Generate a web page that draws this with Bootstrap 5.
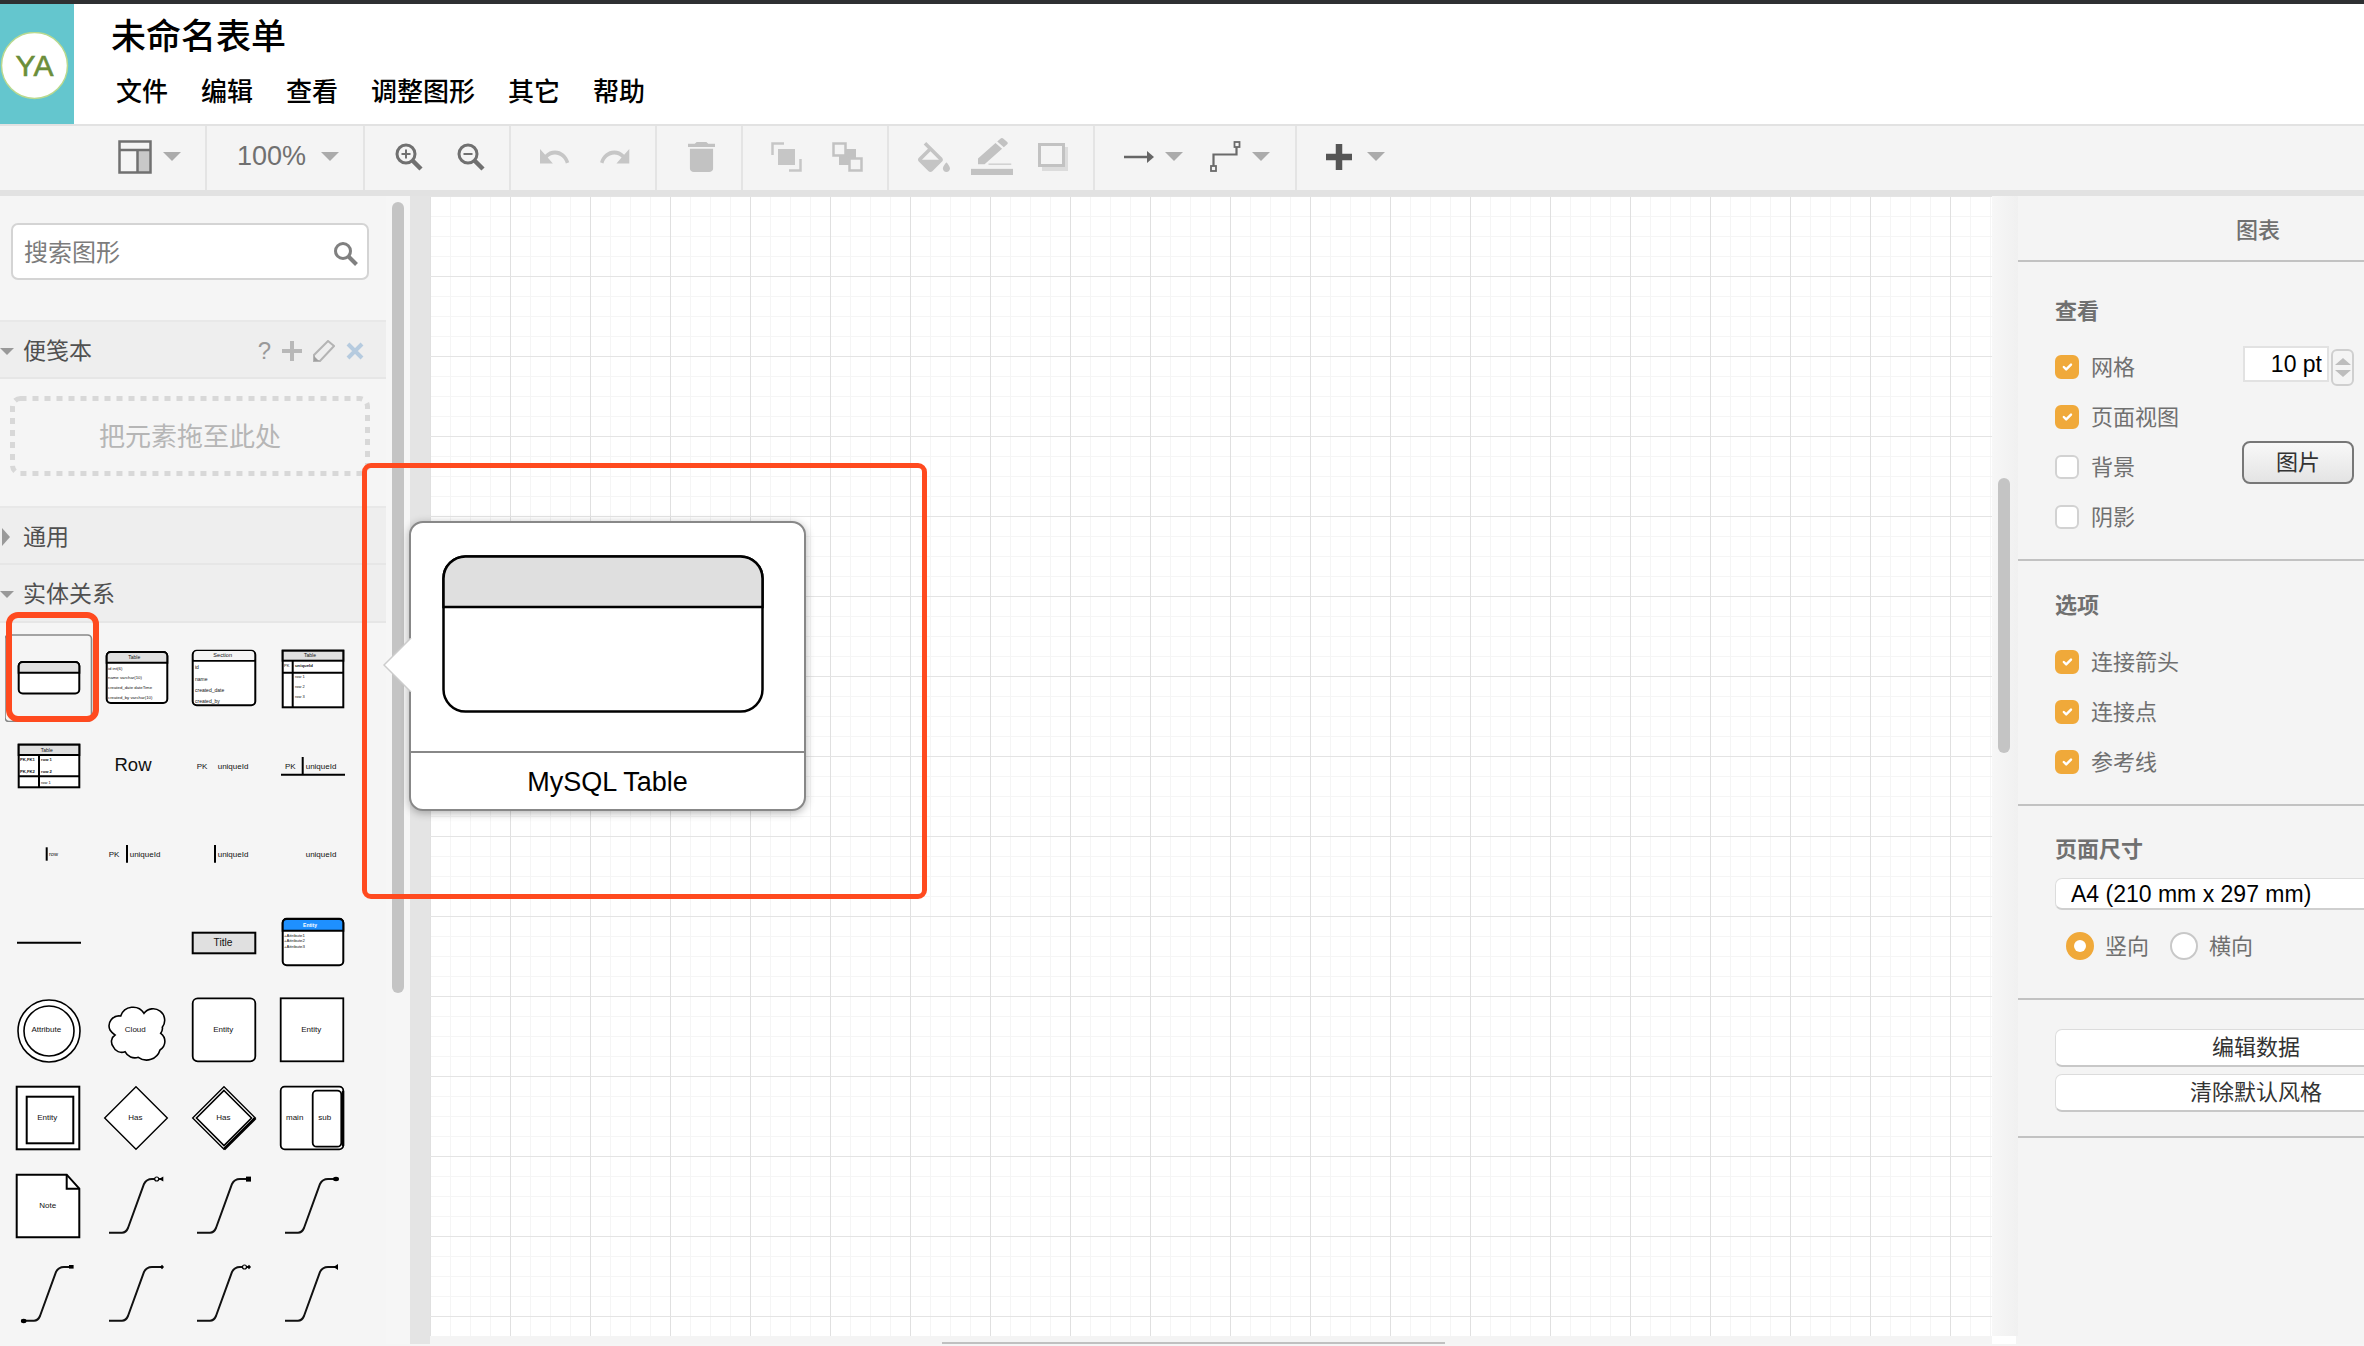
<!DOCTYPE html>
<html lang="zh-CN">

<head>
    <meta charset="UTF-8">
    <title>未命名表单</title>
    <link rel="stylesheet" href="https://cdn.jsdelivr.net/npm/bootstrap@5.3.3/dist/css/bootstrap.min.css">
    <style>
        html, body { height: 100%; overflow: hidden; }
        body { position: relative; background: #f5f5f5; font-family: "Liberation Sans", "Noto Sans CJK SC", sans-serif; color: #000; }
        svg { display: block; flex: none; }
        .darkline { height: 4px; background: #2e3032; }
        .topbar { height: 120px; background: #fff; }
        .logobox { width: 74px; height: 120px; background: #64c6ce; padding-top: 28px; }
        .titletext { font-size: 35px; line-height: 40px; margin: 13px 0 0 37px; height: 40px; font-weight: 500; }
        .menurow { margin: 17px 0 0 42px; gap: 33px; font-size: 26px; line-height: 36px; font-weight: 500; }
        .toolbar { height: 72px; background: #f4f4f4; border-top: 2px solid #e2e2e2; border-bottom: 6px solid #e2e2e2; }
        .tgroup { height: 100%; padding-bottom: 3px; border-right: 2px solid #e4e4e4; }
        .tg1 { width: 207px; padding-left: 118px; gap: 11px; }
        .tg2 { width: 158px; padding-left: 30px; gap: 15px; font-size: 27px; color: #707070; }
        .tg3 { width: 146px; padding-left: 30px; gap: 34px; }
        .tg4 { width: 146px; padding-left: 29px; gap: 30px; }
        .tg5 { width: 86px; padding-left: 31px; }
        .tg6 { width: 146px; padding-left: 28px; gap: 30px; }
        .tg7 { width: 206px; padding-left: 29px; gap: 21px; }
        .tg8 { width: 202px; padding-left: 29px; gap: 11px; }
        .tg9 { padding-left: 29px; gap: 15px; border-right: 0; }
        .caret-d { width: 0; height: 0; border-left: 9px solid transparent; border-right: 9px solid transparent; border-top: 9px solid #ababab; }
        .mainrow { height: 1148px; }
        .leftpane { width: 386px; height: 100%; overflow: hidden; }
        .searchbox { width: 358px; height: 57px; margin: 27px 0 40px 11px; background: #fff; border: 2px solid #d4d4d4; border-radius: 7px; padding: 3px 9px 0 9px; }
        .searchbox input { border: 0; outline: 0; width: 100%; font-size: 24px; background: transparent; font-family: inherit; }
        .searchbox input::placeholder { color: #7c7c7c; opacity: 1; }
        .sechead { height: 59px; padding-top: 3px; background: #eee; border-top: 2px solid #e8e8e8; border-bottom: 2px solid #e6e6e6; font-size: 23px; color: #505050; }
        .sechead.follow { border-top: 0; height: 58px; }
        .tri-d { width: 0; height: 0; margin-right: 9px; border-left: 7px solid transparent; border-right: 7px solid transparent; border-top: 7px solid #999; }
        .tri-r { width: 0; height: 0; margin: 0 13px 0 2px; border-top: 9px solid transparent; border-bottom: 9px solid transparent; border-left: 8px solid #999; }
        .sechelp { margin-left: auto; padding-right: 22px; gap: 11px; color: #999; font-size: 24px; }
        .dropzone { width: 360px; height: 80px; padding-top: 2px; margin: 17px 0 30px 10px; font-size: 26px; color: #b6b6b6; background: url("data:image/svg+xml,%3Csvg xmlns='http://www.w3.org/2000/svg' width='360' height='80'%3E%3Crect x='2.5' y='2.5' width='355' height='75' rx='8' fill='none' stroke='%23d8d8d8' stroke-width='5' stroke-dasharray='6 6'/%3E%3C/svg%3E") no-repeat; }
        .shapegrid { display: grid; grid-template-columns: repeat(4, 88px); grid-auto-rows: 88px; margin: 11px 0 0 5px; }
        .shapegrid text { font-family: "Liberation Sans", sans-serif; fill: #111; }
        .gutterleft { width: 44px; height: 100%; background: #f6f6f6; }
        .thumbleft { width: 12px; height: 791px; margin: 6px 6px 0; background: #c4c4c4; border-radius: 6px; }
        .gutterband { width: 20px; height: 100%; background: #e4e4e4; }
        .centerpane { width: 1588px; height: 100%; }
        .canvasrow { height: 1140px; }
        .canvasarea { width: 1562px; height: 100%; background-color: #fff;
            background-image: linear-gradient(#e4e4e4 1px, transparent 1px), linear-gradient(90deg, #e0e0e0 1px, transparent 1px), linear-gradient(#f5f5f5 1px, transparent 1px), linear-gradient(90deg, #f5f5f5 1px, transparent 1px);
            background-size: 80px 80px, 80px 80px, 20px 20px, 20px 20px; }
        .gutterright { width: 26px; height: 100%; background: linear-gradient(90deg, #f7f7f7, #f0f0f0); padding: 282px 8px 0 6px; }
        .thumbright { height: 275px; background: #c4c4c4; border-radius: 6px; }
        .bottomstrip { height: 8px; background: #f4f4f4; }
        .thumbbottom { width: 503px; height: 2px; margin: 6px 0 0 512px; background: #c0c0c0; }
        .cornerbox { width: 24px; height: 8px; margin-left: auto; margin-right: 2px; background: #fff; }
        .formpane { width: 346px; height: 100%; overflow: hidden; font-size: 22px; color: #707070; background: #f4f4f4; }
        .forminner { width: 480px; }
        .fsec { border-bottom: 2px solid #c2c2c2; padding-left: 37px; }
        .fsec-title { height: 66px; padding: 0 0 2px; font-size: 22px; line-height: 69px; font-weight: 500; text-align: center; }
        .fsec-view { height: 299px; padding-top: 34px; }
        .fsec-opt { height: 245px; padding-top: 29px; }
        .fsec-page { height: 194px; padding-top: 28px; }
        .fsec-act { height: 138px; padding-top: 29px; }
        .fhead { font-weight: 700; font-size: 22px; line-height: 32px; height: 32px; }
        .fsec-view .fhead { margin-bottom: 14px; }
        .fsec-opt .fhead { margin-bottom: 15px; }
        .fline { height: 50px; width: 299px; }
        .fline label { margin-left: 12px; }
        .form-check-input.ckbox { width: 24px; height: 24px; margin: 0; border: 2px solid #d2d2d2; border-radius: 6px; background-size: 78%; flex: none; }
        .form-check-input.rdbox { width: 28px; height: 28px; margin: 0; border: 2px solid #c8c8c8; flex: none; }
        .form-check-input:checked { background-color: #f0a93a; border-color: #f0a93a; }
        .ptinput { width: 86px; height: 36px; margin-bottom: 6px; padding: 0 5px; text-align: right; font-size: 23px; color: #000; border: 2px solid #e2e2e2; border-radius: 0; font-family: inherit; }
        .spinbox { width: 23px; height: 37px; margin-left: 2px; border: 2px solid #cfcfcf; border-radius: 6px; gap: 5px; }
        .spin-u { width: 0; height: 0; border-left: 8px solid transparent; border-right: 8px solid transparent; border-bottom: 7px solid #bdbdbd; }
        .spin-d { width: 0; height: 0; border-left: 8px solid transparent; border-right: 8px solid transparent; border-top: 7px solid #bdbdbd; }
        .imgbtn { width: 112px; height: 43px; margin-bottom: 9px; padding: 0; font-size: 22px; color: #333; border: 2px solid #777; border-radius: 8px; background: linear-gradient(#f8f8f8, #e4e4e4); }
        .pagesel { width: 402px; height: 32px; padding: 0 0 0 15px; margin-top: 12px; font-size: 23px; line-height: 30px; color: #000; background-image: none; border: 1px solid #dcdcdc; border-bottom: 2px solid #cfcfcf; border-radius: 7px; font-family: inherit; }
        .radline { height: 28px; margin: 22px 0 0 11px; }
        .radline label { margin: 0 21px 0 11px; }
        .wbtn { width: 402px; height: 38px; padding: 0; display: block; font-size: 22px; line-height: 34px; color: #333; background: #fff; border: 1px solid #dcdcdc; border-bottom: 2px solid #c8c8c8; border-radius: 7px; }
        .wbtn + .wbtn { margin-top: 7px; }
        .popbox { position: absolute; left: 409px; top: 521px; width: 397px; height: 290px; background: #fff; border: 2px solid #888; border-radius: 14px; box-shadow: 0 2px 8px rgba(0,0,0,.3); }
        .poparrow { position: absolute; left: -28px; top: 115px; }
        .popshape { padding: 32px 0 0 31px; height: 230px; border-bottom: 2px solid #888; }
        .poplabel { font-size: 27px; line-height: 58px; text-align: center; }
        .redbox { position: absolute; border: 5px solid #ff4a1f; border-radius: 9px; pointer-events: none; }
        .redbig { left: 362px; top: 463px; width: 565px; height: 436px; }
        .redsmall { left: 6px; top: 612px; width: 93px; height: 110px; border-width: 6px; border-radius: 12px; }
    </style>
</head>

<body>
    <svg width="0" height="0" class="position-absolute">
        <symbol id="conn" viewBox="0 0 88 88"><path d="M16 70.7H29Q33 70.7 35 66L51 22Q53.5 17 59 17H68" fill="none" stroke="#111" stroke-width="2"/></symbol>
    </svg>

    <div class="darkline"></div>

    <!-- cabecera -->
    <div class="topbar d-flex">
        <div class="logobox">
            <svg width="70" height="70" viewBox="0 0 70 70">
                <circle cx="34.5" cy="33.5" r="33" fill="#fff" stroke="#b9d98f" stroke-width="1.5"/>
                <text x="34.5" y="44" text-anchor="middle" font-size="30" font-family="Liberation Sans" fill="#6b8e3a" stroke="#6b8e3a" stroke-width=".6">YA</text>
            </svg>
        </div>
        <div>
            <div class="titletext">未命名表单</div>
            <div class="menurow d-flex">
                <span>文件</span><span>编辑</span><span>查看</span><span>调整图形</span><span>其它</span><span>帮助</span>
            </div>
        </div>
    </div>

    <!-- barra de herramientas -->
    <div class="toolbar d-flex">
        <div class="tgroup tg1 d-flex align-items-center">
            <svg width="34" height="34" viewBox="0 0 34 34"><rect x="20" y="10" width="12" height="22" fill="#c8c8c8"/><rect x="1.5" y="1.5" width="31" height="31" fill="none" stroke="#707070" stroke-width="2.5"/><path d="M1.5 10H32.5M19.5 10V32.5" stroke="#707070" stroke-width="2.5" fill="none"/></svg>
            <span class="caret-d"></span>
        </div>
        <div class="tgroup tg2 d-flex align-items-center"><span>100%</span><span class="caret-d"></span></div>
        <div class="tgroup tg3 d-flex align-items-center">
            <svg width="28" height="28" viewBox="0 0 28 28"><circle cx="11" cy="11" r="9" fill="none" stroke="#707070" stroke-width="3"/><path d="M17.5 17.5L26 26" stroke="#707070" stroke-width="4.5"/><path d="M6.5 11H15.5M11 6.5V15.5" stroke="#707070" stroke-width="2"/></svg>
            <svg width="28" height="28" viewBox="0 0 28 28"><circle cx="11" cy="11" r="9" fill="none" stroke="#707070" stroke-width="3"/><path d="M17.5 17.5L26 26" stroke="#707070" stroke-width="4.5"/><path d="M6.5 11H15.5" stroke="#707070" stroke-width="2"/></svg>
        </div>
        <div class="tgroup tg4 d-flex align-items-center">
            <svg width="30" height="16" viewBox="2 7 21 10" preserveAspectRatio="none"><path fill="#c6c6c6" d="M12.5 8c-2.65 0-5.05.99-6.9 2.6L2 7v9h9l-3.62-3.62c1.39-1.16 3.16-1.88 5.12-1.88 3.54 0 6.55 2.31 7.6 5.5l2.37-.78C21.08 11.03 17.15 8 12.5 8z"/></svg>
            <svg width="30" height="16" viewBox="1.5 7 21 10" preserveAspectRatio="none"><path fill="#c6c6c6" d="M18.4 10.6C16.55 8.99 14.15 8 11.5 8c-4.65 0-8.58 3.03-9.96 7.22L3.9 16c1.05-3.19 4.05-5.5 7.6-5.5 1.95 0 3.73.72 5.12 1.88L13 16h9V7l-3.6 3.6z"/></svg>
        </div>
        <div class="tgroup tg5 d-flex align-items-center">
            <svg width="27" height="30" viewBox="5 3 14 18" preserveAspectRatio="none"><path fill="#c2c2c2" d="M6 19c0 1.1.9 2 2 2h8c1.1 0 2-.9 2-2V7H6v12zM19 4h-3.5l-1-1h-5l-1 1H5v2h14V4z"/></svg>
        </div>
        <div class="tgroup tg6 d-flex align-items-center">
            <svg width="31" height="30" viewBox="0 0 31 30"><path d="M1.5 13V1.5H13M18 28.5H29.5V17" fill="none" stroke="#c6c6c6" stroke-width="2.5"/><rect x="7" y="7" width="17" height="16" fill="#c6c6c6"/></svg>
            <svg width="31" height="30" viewBox="0 0 31 30"><rect x="7" y="7" width="17" height="16" fill="#c2c2c2"/><rect x="1.5" y="1.5" width="12" height="12" fill="#f4f4f4" stroke="#c2c2c2" stroke-width="2.5"/><rect x="17.5" y="16.5" width="12" height="12" fill="#f4f4f4" stroke="#c2c2c2" stroke-width="2.5"/></svg>
        </div>
        <div class="tgroup tg7 d-flex align-items-center">
            <svg width="32" height="30" viewBox="3 0 18 17" preserveAspectRatio="none"><path fill="#c4c4c4" d="M16.56 8.94L7.62 0 6.21 1.41l2.38 2.38-5.15 5.15c-.59.59-.59 1.54 0 2.12l5.5 5.5c.29.29.68.44 1.06.44s.77-.15 1.06-.44l5.5-5.5c.59-.58.59-1.53 0-2.12zM5.21 10L10 5.21 14.79 10H5.21zM19 11.5s-2 2.17-2 3.5c0 1.1.9 2 2 2s2-.9 2-2c0-1.33-2-3.5-2-3.5z"/></svg>
            <svg width="42" height="37" viewBox="0 0 24 24" preserveAspectRatio="none"><path fill="#c2c2c2" d="M17.75 7L14 3.25l-10 10V17h3.75l10-10zm2.96-2.96c.39-.39.39-1.02 0-1.41L18.37.29c-.39-.39-1.02-.39-1.41 0L15 2.25 18.75 6l1.96-1.96z"/><rect y="20" width="24" height="4" fill="#c2c2c2"/><rect x="10" y="16.5" width="13" height="1" fill="#d2d2d2"/></svg>
            <svg width="30" height="28" viewBox="0 0 30 28" class="ms-1"><rect x="4" y="4" width="26" height="24" fill="#dcdcdc"/><rect x="1.5" y="1.5" width="24" height="21" fill="#f4f4f4" stroke="#c2c2c2" stroke-width="3"/></svg>
        </div>
        <div class="tgroup tg8 d-flex align-items-center">
            <svg width="30" height="14" viewBox="0 0 30 14"><path d="M0 7H24" stroke="#666" stroke-width="2.5"/><path d="M23 1L30 7L23 13Z" fill="#666"/></svg>
            <span class="caret-d"></span>
            <svg width="31" height="31" viewBox="0 0 31 31" class="ms-3"><path d="M3.5 25V13.5H26.5V5" fill="none" stroke="#6a6a6a" stroke-width="2.2"/><rect x="1" y="25" width="5" height="5" fill="#f4f4f4" stroke="#6a6a6a" stroke-width="1.8"/><rect x="24.5" y="1" width="5" height="5" fill="#f4f4f4" stroke="#6a6a6a" stroke-width="1.8"/></svg>
            <span class="caret-d"></span>
        </div>
        <div class="tgroup tg9 d-flex align-items-center">
            <svg width="26" height="26" viewBox="0 0 26 26"><path d="M13 0V26M0 13H26" stroke="#555" stroke-width="6.5"/></svg>
            <span class="caret-d"></span>
        </div>
    </div>

    <div class="mainrow d-flex">

        <!-- panel izquierdo -->
        <div class="leftpane">
            <div class="searchbox d-flex align-items-center">
                <input type="text" placeholder="搜索图形">
                <svg width="25" height="25" viewBox="0 0 25 25"><circle cx="10" cy="10" r="7.5" fill="none" stroke="#808080" stroke-width="3"/><path d="M15.5 15.5L23.5 23.5" stroke="#808080" stroke-width="4"/></svg>
            </div>

            <div class="sechead d-flex align-items-center">
                <span class="tri-d"></span><span>便笺本</span>
                <div class="sechelp d-flex align-items-center">
                    <span>?</span>
                    <svg width="20" height="20" viewBox="0 0 20 20"><path d="M10 0V20M0 10H20" stroke="#b8b8b8" stroke-width="4"/></svg>
                    <svg width="22" height="22" viewBox="0 0 22 22"><path d="M1 21V15L15 1L21 6L7 21Z" fill="none" stroke="#b4b4b4" stroke-width="2"/><path d="M1 21V16L6 21Z" fill="#a0a0a0"/></svg>
                    <svg width="18" height="18" viewBox="0 0 18 18"><path d="M2 2L16 16M16 2L2 16" stroke="#b6cbdf" stroke-width="4"/></svg>
                </div>
            </div>
            <div class="dropzone d-flex align-items-center justify-content-center">把元素拖至此处</div>

            <div class="sechead d-flex align-items-center"><span class="tri-r"></span><span>通用</span></div>
            <div class="sechead follow d-flex align-items-center"><span class="tri-d"></span><span>实体关系</span></div>

            <div class="shapegrid">
                <!-- fila 1 -->
                <svg width="88" height="88" viewBox="0 0 88 88"><rect x="0" y="1" width="86.5" height="86.5" rx="4" fill="#f5f5f5" stroke="#888" stroke-width="1.6"/><rect x="13.7" y="28" width="60.6" height="31.5" rx="4" fill="#fff" stroke="#000" stroke-width="2"/><path d="M13.7 38.7V32a4 4 0 0 1 4-4H70.3a4 4 0 0 1 4 4V38.7Z" fill="#e0e0e0" stroke="#000" stroke-width="2"/></svg>
                <svg width="88" height="88" viewBox="0 0 88 88"><rect x="13.7" y="18" width="60.6" height="51" rx="4" fill="#fff" stroke="#000" stroke-width="2"/><path d="M13.7 28.7V22a4 4 0 0 1 4-4H70.3a4 4 0 0 1 4 4V28.7Z" fill="#e0e0e0" stroke="#000" stroke-width="2"/><text x="41.3" y="25" text-anchor="middle" font-size="5">Table</text><g font-size="4.3"><text x="15" y="35.5">id int(6)</text><text x="15" y="45">name varchar(10)</text><text x="15" y="55">created_date dateTime</text><text x="15" y="65">created_by varchar(10)</text></g></svg>
                <svg width="88" height="88" viewBox="0 0 88 88"><rect x="11.7" y="16.7" width="62.6" height="54.6" rx="4" fill="#fff" stroke="#000" stroke-width="2"/><path d="M11.7 26.7H74.3" stroke="#000" stroke-width="2"/><path d="M13 26V20a3 3 0 0 1 3-3H70a3 3 0 0 1 3 3V26Z" fill="#f5f5f5"/><text x="41.7" y="23" text-anchor="middle" font-size="5.6">Section</text><g font-size="5"><text x="14" y="34.5">id</text><text x="14" y="46.5">name</text><text x="14" y="57.5">created_date</text><text x="14" y="68.5">created_by</text></g></svg>
                <svg width="88" height="88" viewBox="0 0 88 88"><rect x="13.7" y="16.7" width="60.6" height="56.6" fill="#fff" stroke="#000" stroke-width="2"/><rect x="13.7" y="16.7" width="60.6" height="10" fill="#e0e0e0" stroke="#000" stroke-width="2"/><path d="M13.7 38.7H74.3M23.7 26.7V73.3" stroke="#000" stroke-width="2"/><text x="41" y="23" text-anchor="middle" font-size="5">Table</text><text x="15" y="33" font-size="4">PK</text><text x="26" y="33" font-size="4.3" font-weight="700">uniqueId</text><g font-size="4"><text x="26" y="43.7">row 1</text><text x="26" y="53.7">row 2</text><text x="26" y="63.7">row 3</text></g></svg>
                <!-- fila 2 -->
                <svg width="88" height="88" viewBox="0 0 88 88"><rect x="13.7" y="22.7" width="60.6" height="42.6" fill="#fff" stroke="#000" stroke-width="2"/><rect x="13.7" y="22.7" width="60.6" height="10.3" fill="#e0e0e0" stroke="#000" stroke-width="2"/><path d="M13.7 54.3H74.3M34 33V65.3" stroke="#000" stroke-width="2"/><text x="41.7" y="29.5" text-anchor="middle" font-size="5">Table</text><g font-size="4.2" font-weight="700"><text x="15" y="38.5">PK,FK1</text><text x="15" y="50.5">PK,FK2</text><text x="36" y="38.5">row 1</text><text x="36" y="50.5">row 2</text></g><text x="36" y="62" font-size="4">row 1</text></svg>
                <svg width="88" height="88" viewBox="0 0 88 88"><text x="40" y="48.7" text-anchor="middle" font-size="18.5">Row</text></svg>
                <svg width="88" height="88" viewBox="0 0 88 88"><g font-size="8"><text x="15.7" y="47">PK</text><text x="36.7" y="47">uniqueId</text></g></svg>
                <svg width="88" height="88" viewBox="0 0 88 88"><path d="M33.7 35V52M12 52.7H76" stroke="#000" stroke-width="2"/><g font-size="8"><text x="16" y="47">PK</text><text x="36.7" y="47">uniqueId</text></g></svg>
                <!-- fila 3 -->
                <svg width="88" height="88" viewBox="0 0 88 88"><path d="M41.7 37.3V50.7" stroke="#000" stroke-width="2"/><text x="44" y="46" font-size="5.5">row</text></svg>
                <svg width="88" height="88" viewBox="0 0 88 88"><path d="M34 35V52.7" stroke="#000" stroke-width="2"/><g font-size="8"><text x="15.7" y="47">PK</text><text x="36.7" y="47">uniqueId</text></g></svg>
                <svg width="88" height="88" viewBox="0 0 88 88"><path d="M34 35V52.7" stroke="#000" stroke-width="2"/><text x="36.7" y="47" font-size="8">uniqueId</text></svg>
                <svg width="88" height="88" viewBox="0 0 88 88"><text x="36.7" y="47" font-size="8">uniqueId</text></svg>
                <!-- fila 4 -->
                <svg width="88" height="88" viewBox="0 0 88 88"><path d="M12 44.7H76" stroke="#000" stroke-width="2"/></svg>
                <svg width="88" height="88" viewBox="0 0 88 88"></svg>
                <svg width="88" height="88" viewBox="0 0 88 88"><rect x="11.7" y="34.7" width="62.6" height="20.6" fill="#e0e0e0" stroke="#000" stroke-width="2"/><text x="42" y="47.5" text-anchor="middle" font-size="10.2">Title</text></svg>
                <svg width="88" height="88" viewBox="0 0 88 88"><rect x="13.7" y="20.7" width="60.6" height="46.6" rx="4" fill="#fff" stroke="#000" stroke-width="2"/><path d="M13.7 32.7V25a4 4 0 0 1 4-4H70.3a4 4 0 0 1 4 4V32.7Z" fill="#1e90ff" stroke="#000" stroke-width="2"/><text x="41" y="28.7" text-anchor="middle" font-size="5" font-weight="700" style="fill:#fff">Entity</text><g font-size="4.3"><text x="15" y="39">+Attribute1</text><text x="15" y="44">+Attribute2</text><text x="15" y="50">+Attribute3</text></g></svg>
                <!-- fila 5 -->
                <svg width="88" height="88" viewBox="0 0 88 88"><circle cx="44" cy="45" r="31" fill="#fff" stroke="#000" stroke-width="1.6"/><circle cx="44" cy="45" r="25" fill="#fff" stroke="#000" stroke-width="1.6"/><text x="41.3" y="46" text-anchor="middle" font-size="8">Attribute</text></svg>
                <svg width="88" height="88" viewBox="0 0 88 88"><path d="M17 44A10 10 0 0 1 27.7 30A13 13 0 0 1 51 27.3A11 11 0 0 1 69.3 41.3Q70 44 67.7 47.3A10 10 0 0 1 67 64A14 14 0 0 1 45.3 71.3A11 11 0 0 1 32 65.7A9 9 0 0 1 20.3 60.7A8 8 0 0 1 22 49Q19 47 17 44Z" fill="#fff" stroke="#000" stroke-width="1.6"/><text x="42.3" y="46" text-anchor="middle" font-size="8">Cloud</text></svg>
                <svg width="88" height="88" viewBox="0 0 88 88"><rect x="11.7" y="12.3" width="62.6" height="63" rx="5" fill="#fff" stroke="#000" stroke-width="1.8"/><text x="42.3" y="46" text-anchor="middle" font-size="8">Entity</text></svg>
                <svg width="88" height="88" viewBox="0 0 88 88"><rect x="11.7" y="12.3" width="62.6" height="63" fill="#fff" stroke="#000" stroke-width="1.8"/><text x="42.3" y="46" text-anchor="middle" font-size="8">Entity</text></svg>
                <!-- fila 6 -->
                <svg width="88" height="88" viewBox="0 0 88 88"><rect x="11.7" y="12.7" width="62.6" height="62.6" fill="#fff" stroke="#000" stroke-width="2"/><rect x="21.7" y="22.7" width="46.6" height="46.6" fill="#fff" stroke="#000" stroke-width="2"/><text x="42.3" y="46" text-anchor="middle" font-size="8">Entity</text></svg>
                <svg width="88" height="88" viewBox="0 0 88 88"><path d="M43 12.7L74.3 44L43 75.3L11.7 44Z" fill="#fff" stroke="#000" stroke-width="1.4"/><text x="42.3" y="46" text-anchor="middle" font-size="8">Has</text></svg>
                <svg width="88" height="88" viewBox="0 0 88 88"><path d="M43 12.7L74.3 44L43 75.3L11.7 44Z" fill="#fff" stroke="#000" stroke-width="1.4"/><path d="M43 16.5L70.5 44L43 71.5L15.5 44Z" fill="#fff" stroke="#000" stroke-width="1.6"/><path d="M74.3 44L43 75.3" stroke="#000" stroke-width="3"/><text x="42.3" y="46" text-anchor="middle" font-size="8">Has</text></svg>
                <svg width="88" height="88" viewBox="0 0 88 88"><rect x="11.7" y="12.7" width="62.6" height="62.6" rx="4" fill="#fff" stroke="#000" stroke-width="1.8"/><rect x="43.7" y="16.7" width="28.6" height="56" rx="4" fill="#fff" stroke="#000" stroke-width="1.8"/><path d="M74 17V72" stroke="#000" stroke-width="2.4"/><text x="17" y="46" font-size="8">main</text><text x="49.3" y="46" font-size="8">sub</text></svg>
                <!-- fila 7 -->
                <svg width="88" height="88" viewBox="0 0 88 88"><path d="M11.7 12.7H61.7L74.3 26.7V75.3H11.7Z" fill="#fff" stroke="#000" stroke-width="2"/><path d="M61.7 12.7V26.7H74.3" fill="none" stroke="#000" stroke-width="2"/><text x="42.7" y="45.7" text-anchor="middle" font-size="8">Note</text></svg>
                <svg width="88" height="88"><use href="#conn"/><circle cx="63.7" cy="17" r="2" fill="#f5f5f5" stroke="#000" stroke-width="1.2"/><path d="M66 17L70.3 14.5V19.5Z" fill="#000"/></svg>
                <svg width="88" height="88"><use href="#conn"/><rect x="65" y="14.6" width="5" height="5" fill="#000"/></svg>
                <svg width="88" height="88"><use href="#conn"/><ellipse cx="67" cy="17" rx="3" ry="2.2" fill="#000"/></svg>
                <!-- fila 8 -->
                <svg width="88" height="88"><use href="#conn"/><ellipse cx="18.7" cy="71" rx="2.8" ry="2.2" fill="#000"/><rect x="64" y="15" width="4.6" height="3.6" fill="#000"/></svg>
                <svg width="88" height="88"><use href="#conn"/><path d="M67 17L69 14.8L71 17L69 19.2Z" fill="#000"/></svg>
                <svg width="88" height="88"><use href="#conn"/><circle cx="63.5" cy="17" r="2" fill="#f5f5f5" stroke="#000" stroke-width="1.2"/><path d="M66 17L68 14.8L70 17L68 19.2Z" fill="#000"/></svg>
                <svg width="88" height="88"><use href="#conn"/><path d="M64.5 17L69 14V20Z" fill="#000"/></svg>
            </div>
        </div>

        <div class="gutterleft d-flex">
            <div class="thumbleft"></div>
            <div class="gutterband"></div>
        </div>

        <!-- lienzo -->
        <div class="centerpane">
            <div class="canvasrow d-flex">
                <div class="canvasarea"></div>
                <div class="gutterright"><div class="thumbright"></div></div>
            </div>
            <div class="bottomstrip d-flex">
                <div class="thumbbottom"></div>
                <div class="cornerbox"></div>
            </div>
        </div>

        <!-- panel derecho -->
        <div class="formpane">
            <div class="forminner">
                <div class="fsec fsec-title">图表</div>

                <div class="fsec fsec-view">
                    <div class="fhead">查看</div>
                    <div class="fline d-flex align-items-center">
                        <input class="form-check-input ckbox" type="checkbox" checked id="ckGrid"><label for="ckGrid">网格</label>
                        <input class="ptinput ms-auto" type="text" value="10 pt">
                        <div class="spinbox d-flex flex-column align-items-center justify-content-center"><span class="spin-u"></span><span class="spin-d"></span></div>
                    </div>
                    <div class="fline d-flex align-items-center">
                        <input class="form-check-input ckbox" type="checkbox" checked id="ckPage"><label for="ckPage">页面视图</label>
                    </div>
                    <div class="fline d-flex align-items-center">
                        <input class="form-check-input ckbox" type="checkbox" id="ckBg"><label for="ckBg">背景</label>
                        <button class="btn imgbtn ms-auto" type="button">图片</button>
                    </div>
                    <div class="fline d-flex align-items-center">
                        <input class="form-check-input ckbox" type="checkbox" id="ckShadow"><label for="ckShadow">阴影</label>
                    </div>
                </div>

                <div class="fsec fsec-opt">
                    <div class="fhead">选项</div>
                    <div class="fline d-flex align-items-center">
                        <input class="form-check-input ckbox" type="checkbox" checked id="ckArrow"><label for="ckArrow">连接箭头</label>
                    </div>
                    <div class="fline d-flex align-items-center">
                        <input class="form-check-input ckbox" type="checkbox" checked id="ckPoint"><label for="ckPoint">连接点</label>
                    </div>
                    <div class="fline d-flex align-items-center">
                        <input class="form-check-input ckbox" type="checkbox" checked id="ckGuide"><label for="ckGuide">参考线</label>
                    </div>
                </div>

                <div class="fsec fsec-page">
                    <div class="fhead">页面尺寸</div>
                    <select class="form-select pagesel"><option>A4 (210 mm x 297 mm)</option></select>
                    <div class="radline d-flex align-items-center">
                        <input class="form-check-input rdbox" type="radio" name="orient" id="rdV" checked><label for="rdV">竖向</label>
                        <input class="form-check-input rdbox" type="radio" name="orient" id="rdH"><label for="rdH">横向</label>
                    </div>
                </div>

                <div class="fsec fsec-act">
                    <button class="btn wbtn" type="button">编辑数据</button>
                    <button class="btn wbtn" type="button">清除默认风格</button>
                </div>
            </div>
        </div>
    </div>

    <!-- vista previa y marcas -->
    <div class="popbox">
        <svg class="poparrow" width="30" height="54" viewBox="0 0 30 54"><path d="M28 0L1 27L28 54" fill="#fff" stroke="#ccc" stroke-width="1.5"/><path d="M28 1V53H30V1Z" fill="#fff"/></svg>
        <div class="popshape">
            <svg width="322" height="158" viewBox="0 0 322 158"><rect x="1.5" y="1.5" width="319" height="155" rx="22" fill="#fff" stroke="#000" stroke-width="2.5"/><path d="M1.5 52V23.5a22 22 0 0 1 22-22H298.5a22 22 0 0 1 22 22V52Z" fill="#dfdfdf" stroke="#000" stroke-width="2.5"/></svg>
        </div>
        <div class="poplabel">MySQL Table</div>
    </div>
    <div class="redbox redbig"></div>
    <div class="redbox redsmall"></div>

    <script src="https://cdn.jsdelivr.net/npm/bootstrap@5.3.3/dist/js/bootstrap.bundle.min.js"></script>
</body>

</html>
